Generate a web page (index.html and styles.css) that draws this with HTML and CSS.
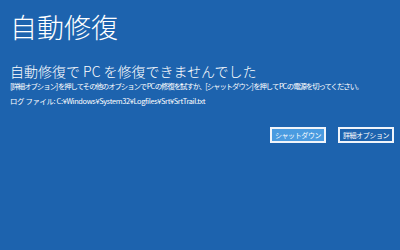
FILE: index.html
```html
<!DOCTYPE html>
<html lang="ja">
<head>
    <meta charset="UTF-8">
    <title>自動修復</title>
    <link rel="stylesheet" href="styles.css">
</head>
<body>
    <div class="screen">
        <h1>自動修復</h1>
        <h2>自動修復で PC を修復できませんでした</h2>
        <p class="msg hint">[詳細オプション] を押してその他のオプションで PC の修復を試すか、[シャットダウン] を押して PC の電源を切ってください。</p>
        <p class="msg log">ログ ファイル: C:¥Windows¥System32¥Logfiles¥Srt¥SrtTrail.txt</p>
        <div class="actions">
            <button class="btn primary">シャットダウン</button>
            <button class="btn">詳細オプション</button>
        </div>
    </div>
</body>
</html>
```

FILE: styles.css
```css
body {
    margin: 0;
    background: #1d63ae;
    font-family: "Noto Sans CJK JP", "Noto Sans", sans-serif;
    color: white;
}
.screen {
    width: 400px;
    height: 250px;
    padding: 0 0 0 10px;
    box-sizing: border-box;
}
h1 {
    margin: 0;
    padding-top: 9px;
    font-size: 27px;
    font-weight: 300;
    line-height: 36px;
}
h2 {
    margin: 17px 0 0;
    font-size: 14px;
    font-weight: 300;
    line-height: 18px;
}
.msg {
    margin: 0;
    font-size: 7.4px;
    line-height: 11px;
    letter-spacing: -0.35px;
    white-space: nowrap;
}
.hint {
    letter-spacing: -1.05px;
}
.log {
    margin-top: 4px;
}
.actions {
    display: flex;
    justify-content: flex-end;
    gap: 12px;
    padding-right: 6px;
    margin-top: 21px;
}
.btn {
    font-family: inherit;
    font-size: 7px;
    letter-spacing: -0.4px;
    white-space: nowrap;
    color: white;
    background: #1d63ae;
    border: 2px solid #f0f4fa;
    width: 56px;
    height: 16px;
    padding: 0;
    line-height: 12px;
}
.primary {
    background: #4a9be0;
}
```
